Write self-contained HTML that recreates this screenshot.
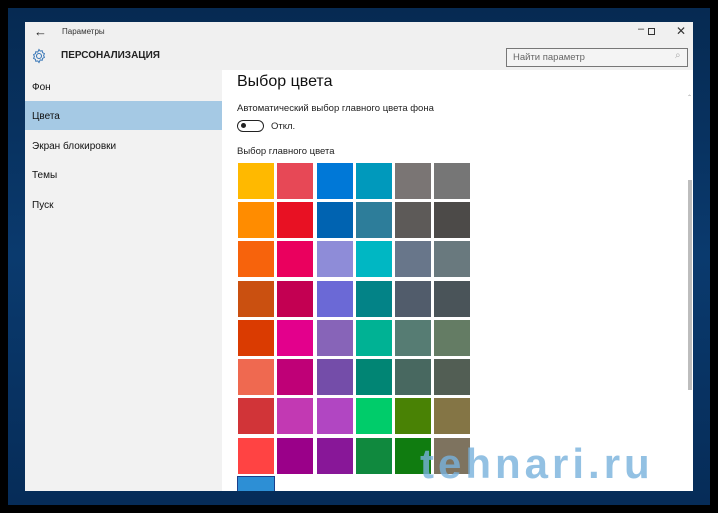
<!DOCTYPE html>
<html><head><meta charset="utf-8"><style>
*{margin:0;padding:0;box-sizing:border-box}
body{width:718px;height:513px;background:#000;position:relative;overflow:hidden;font-family:"Liberation Sans",sans-serif}
.desk{position:absolute;left:8px;top:8px;width:702px;height:497px;background:linear-gradient(180deg,#062a52,#0a3a6e 50%,#062c58)}
.win{position:absolute;left:25px;top:22px;width:668px;height:469px;background:#fff;overflow:hidden}
.hdr{position:absolute;left:0;top:0;width:668px;height:48px;background:#f0f0f0}
.side{position:absolute;left:0;top:48px;width:197px;height:421px;background:#f2f2f2}
.t{position:absolute;white-space:nowrap;color:#111}
.sel{position:absolute;left:0;top:31px;width:197px;height:29px;background:#a5c9e4}
.cell{position:absolute;width:36px;height:36px}
.wm{position:absolute;left:420px;top:440px;font:bold 42px "Liberation Sans",sans-serif;color:rgba(120,178,220,.8);letter-spacing:4px}
</style></head><body>
<div class="desk"></div>
<div class="win">
 <div class="hdr">
  <div class="t" style="left:9px;top:2px;font-size:13px;color:#222">&#8592;</div>
  <div class="t" style="left:37px;top:5px;font-size:8px;color:#333">Параметры</div>
  <div class="t" style="left:613px;top:1px;font-size:11px;color:#333">&#8211;</div>
  <div style="position:absolute;left:623px;top:6px;width:7px;height:7px;border:1px solid #333"></div>
  <div class="t" style="left:651px;top:2px;font-size:12px;color:#333">&#10005;</div>
  <svg style="position:absolute;left:6px;top:26px" width="16" height="16" viewBox="0 0 16 16"><circle cx="8" cy="8" r="2.5" fill="none" stroke="#3a78b8" stroke-width="1.1"/><path d="M8 1.5l1.2 1.6 2-.4.4 2 1.8.9-.8 1.9.8 1.9-1.8.9-.4 2-2-.4L8 14.5l-1.2-1.6-2 .4-.4-2-1.8-.9.8-1.9-.8-1.9 1.8-.9.4-2 2 .4z" fill="none" stroke="#3a78b8" stroke-width="1"/></svg>
  <div class="t" style="left:36px;top:28px;font-size:10px;font-weight:bold;color:#222">ПЕРСОНАЛИЗАЦИЯ</div>
  <div style="position:absolute;left:481px;top:26px;width:182px;height:19px;border:1px solid #777;background:#f4f4f4"></div>
  <div class="t" style="left:488px;top:30px;font-size:9.5px;color:#666">Найти параметр</div>
  <div class="t" style="left:650px;top:28px;font-size:10px;color:#aaa">&#8981;</div>
 </div>
 <div class="side">
  <div class="sel"></div>
  <div class="t" style="left:7px;top:12px;font-size:10px">Фон</div>
  <div class="t" style="left:7px;top:41px;font-size:10px">Цвета</div>
  <div class="t" style="left:7px;top:71px;font-size:10px">Экран блокировки</div>
  <div class="t" style="left:7px;top:100px;font-size:10px">Темы</div>
  <div class="t" style="left:7px;top:130px;font-size:10px">Пуск</div>
 </div>
 <div class="t" style="left:212px;top:51px;font-size:16px;color:#111">Выбор цвета</div>
 <div class="t" style="left:212px;top:81px;font-size:9.5px;color:#222">Автоматический выбор главного цвета фона</div>
 <div style="position:absolute;left:212px;top:98px;width:27px;height:12px;border:1.5px solid #222;border-radius:6px"><div style="position:absolute;left:3px;top:2px;width:5px;height:5px;border-radius:50%;background:#222"></div></div>
 <div class="t" style="left:246px;top:99px;font-size:9.5px;color:#222">Откл.</div>
 <div class="t" style="left:212px;top:124px;font-size:9.5px;color:#222">Выбор главного цвета</div>
 <div style="position:absolute;left:663px;top:158px;width:4px;height:210px;background:#bdbdbd"></div>
 <div class="t" style="left:662px;top:72px;font-size:6px;color:#999">&#8963;</div>
</div>
<div style="position:absolute;left:25px;top:22px">
<div class="cell" style="left:213px;top:141px;background:#ffb900"></div><div class="cell" style="left:252px;top:141px;background:#e74856"></div><div class="cell" style="left:292px;top:141px;background:#0078d7"></div><div class="cell" style="left:331px;top:141px;background:#0099bc"></div><div class="cell" style="left:370px;top:141px;background:#7a7574"></div><div class="cell" style="left:409px;top:141px;background:#767676"></div>
<div class="cell" style="left:213px;top:180px;background:#ff8c00"></div><div class="cell" style="left:252px;top:180px;background:#e81123"></div><div class="cell" style="left:292px;top:180px;background:#0063b1"></div><div class="cell" style="left:331px;top:180px;background:#2d7d9a"></div><div class="cell" style="left:370px;top:180px;background:#5d5a58"></div><div class="cell" style="left:409px;top:180px;background:#4c4a48"></div>
<div class="cell" style="left:213px;top:219px;background:#f7630c"></div><div class="cell" style="left:252px;top:219px;background:#ea005e"></div><div class="cell" style="left:292px;top:219px;background:#8e8cd8"></div><div class="cell" style="left:331px;top:219px;background:#00b7c3"></div><div class="cell" style="left:370px;top:219px;background:#68768a"></div><div class="cell" style="left:409px;top:219px;background:#69797e"></div>
<div class="cell" style="left:213px;top:259px;background:#ca5010"></div><div class="cell" style="left:252px;top:259px;background:#c30052"></div><div class="cell" style="left:292px;top:259px;background:#6b69d6"></div><div class="cell" style="left:331px;top:259px;background:#038387"></div><div class="cell" style="left:370px;top:259px;background:#515c6b"></div><div class="cell" style="left:409px;top:259px;background:#4a5459"></div>
<div class="cell" style="left:213px;top:298px;background:#da3b01"></div><div class="cell" style="left:252px;top:298px;background:#e3008c"></div><div class="cell" style="left:292px;top:298px;background:#8764b8"></div><div class="cell" style="left:331px;top:298px;background:#00b294"></div><div class="cell" style="left:370px;top:298px;background:#567c73"></div><div class="cell" style="left:409px;top:298px;background:#647c64"></div>
<div class="cell" style="left:213px;top:337px;background:#ef6950"></div><div class="cell" style="left:252px;top:337px;background:#bf0077"></div><div class="cell" style="left:292px;top:337px;background:#744da9"></div><div class="cell" style="left:331px;top:337px;background:#018574"></div><div class="cell" style="left:370px;top:337px;background:#486860"></div><div class="cell" style="left:409px;top:337px;background:#525e54"></div>
<div class="cell" style="left:213px;top:376px;background:#d13438"></div><div class="cell" style="left:252px;top:376px;background:#c239b3"></div><div class="cell" style="left:292px;top:376px;background:#b146c2"></div><div class="cell" style="left:331px;top:376px;background:#00cc6a"></div><div class="cell" style="left:370px;top:376px;background:#498205"></div><div class="cell" style="left:409px;top:376px;background:#847545"></div>
<div class="cell" style="left:213px;top:416px;background:#ff4343"></div><div class="cell" style="left:252px;top:416px;background:#9a0089"></div><div class="cell" style="left:292px;top:416px;background:#881798"></div><div class="cell" style="left:331px;top:416px;background:#10893e"></div><div class="cell" style="left:370px;top:416px;background:#107c10"></div><div class="cell" style="left:409px;top:416px;background:#7e735f"></div>
<div class="cell" style="left:212px;top:454px;width:38px;height:15px;background:#2d8fd5;border:1.5px solid #1a3f8a;border-bottom:none"></div>
</div>
<div class="wm">tehnari.ru</div>
</body></html>
